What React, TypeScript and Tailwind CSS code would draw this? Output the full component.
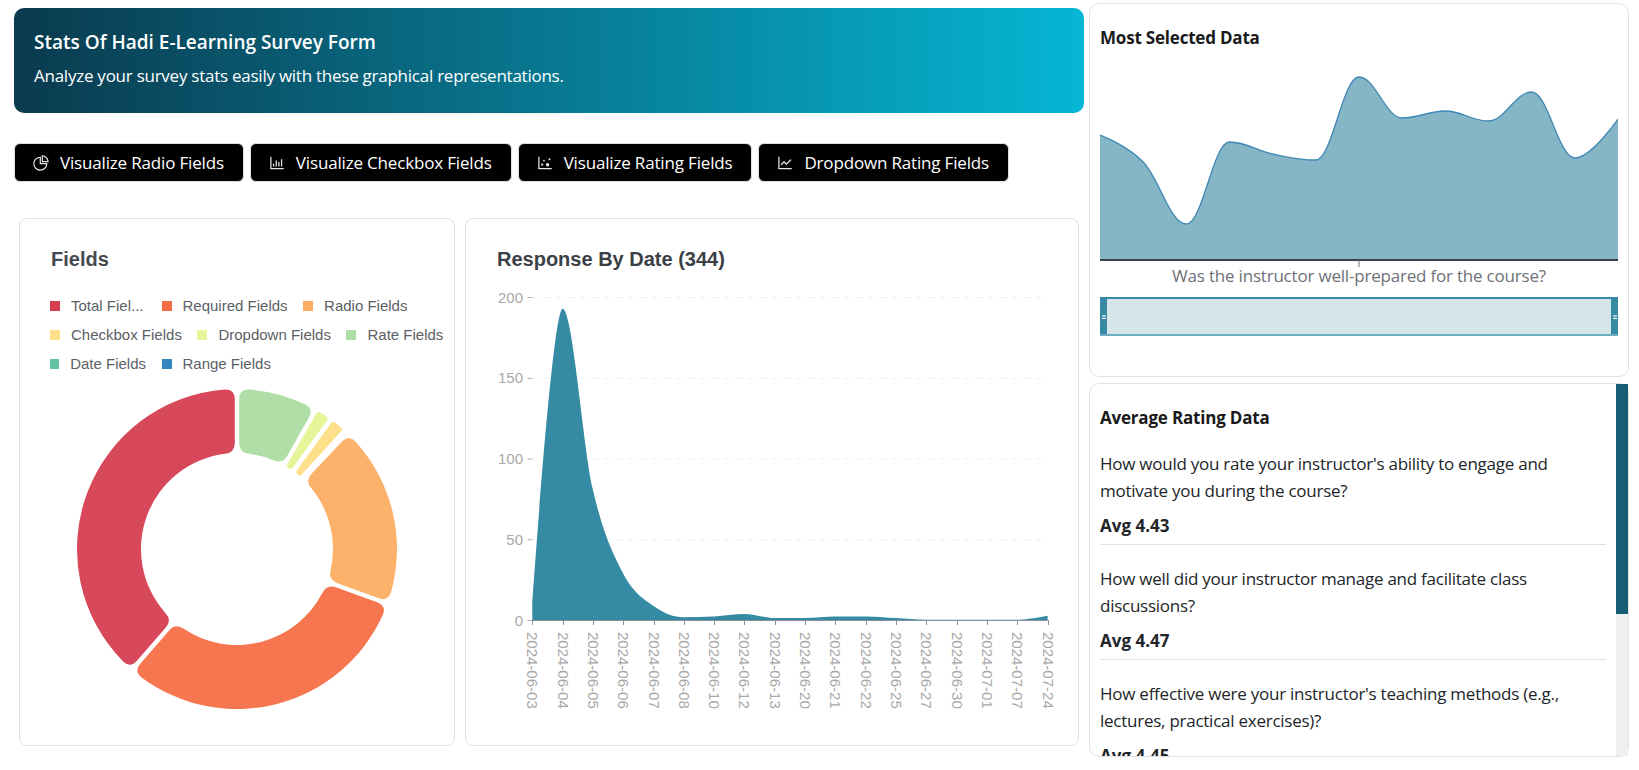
import { AiOutlineBarChart, AiOutlineDotChart, AiOutlineLineChart, AiOutlinePieChart } from "react-icons/ai"

const BUTTONS = [
  { label: "Visualize Radio Fields", icon: AiOutlinePieChart },
  { label: "Visualize Checkbox Fields", icon: AiOutlineBarChart },
  { label: "Visualize Rating Fields", icon: AiOutlineDotChart },
  { label: "Dropdown Rating Fields", icon: AiOutlineLineChart },
]

const LEGEND = [
  { label: "Total Fiel...", color: "bg-[#d53e4f]", width: "w-[96px]" },
  { label: "Required Fields", color: "bg-[#f46d43]", width: "" },
  { label: "Radio Fields", color: "bg-[#fdae61]", width: "" },
  { label: "Checkbox Fields", color: "bg-[#fee08b]", width: "" },
  { label: "Dropdown Fields", color: "bg-[#e6f598]", width: "" },
  { label: "Rate Fields", color: "bg-[#abdda4]", width: "" },
  { label: "Date Fields", color: "bg-[#66c2a5]", width: "w-[96px]" },
  { label: "Range Fields", color: "bg-[#3288bd]", width: "" },
]

// clockwise degrees from 12 o'clock
const SLICES = [
  { from: 221, to: 360, fill: "#d7485a" },
  { from: 110, to: 221, fill: "#f6774f" },
  { from: 43.5, to: 110, fill: "#fdb26b" },
  { from: 36, to: 42.3, fill: "#fee08b" },
  { from: 29.5, to: 35.8, fill: "#e6f598" },
  { from: 0, to: 29.5, fill: "#afdfa7" },
]

const DATES = [
  "2024-06-03", "2024-06-04", "2024-06-05", "2024-06-06", "2024-06-07", "2024-06-08",
  "2024-06-10", "2024-06-12", "2024-06-13", "2024-06-20", "2024-06-21", "2024-06-22",
  "2024-06-25", "2024-06-27", "2024-06-30", "2024-07-01", "2024-07-07", "2024-07-24",
]
const RESPONSES = [11, 193, 81, 29, 9, 2, 2.5, 4, 1.5, 1.5, 2.5, 2.5, 1.5, 0.5, 0.5, 0.5, 0.5, 3]
// page y of each point on the Most Selected curve
const SELECTED = [135, 162, 224, 142, 154, 160, 77, 118, 111, 121, 92, 158, 119]

const RATINGS = [
  { q: "How would you rate your instructor's ability to engage and motivate you during the course?", avg: "4.43" },
  { q: "How well did your instructor manage and facilitate class discussions?", avg: "4.47" },
  { q: "How effective were your instructor's teaching methods (e.g., lectures, practical exercises)?", avg: "4.45" },
]

function sectorPath(from: number, to: number, cx: number, cy: number, r0: number, r1: number, pad: number) {
  const rad = (d: number) => (d * Math.PI) / 180
  const pt = (r: number, a: number) => `${(cx + r * Math.sin(a)).toFixed(2)} ${(cy - r * Math.cos(a)).toFixed(2)}`
  const a = rad(from)
  const b = rad(to)
  const corner = Math.min(10, ((b - a) * r0 - pad * 2) / 2)
  const start = (r: number) => a + Math.asin(pad / r)
  const end = (r: number) => b - Math.asin(pad / r)
  const large = b - a > Math.PI ? 1 : 0
  return [
    `M${pt(r1 - corner, start(r1 - corner))}`,
    `Q${pt(r1, start(r1))} ${pt(r1, start(r1) + corner / r1)}`,
    `A${r1} ${r1} 0 ${large} 1 ${pt(r1, end(r1) - corner / r1)}`,
    `Q${pt(r1, end(r1))} ${pt(r1 - corner, end(r1 - corner))}`,
    `L${pt(r0 + corner, end(r0 + corner))}`,
    `Q${pt(r0, end(r0))} ${pt(r0, end(r0) - corner / r0)}`,
    `A${r0} ${r0} 0 ${large} 0 ${pt(r0, start(r0) + corner / r0)}`,
    `Q${pt(r0, start(r0))} ${pt(r0 + corner, start(r0 + corner))}`,
    "Z",
  ].join(" ")
}

// smooth curve, flat at local extremes so it doesn't overshoot
function smoothLine(points: [number, number][], k = 1 / 3) {
  let d = `M${points[0][0]} ${points[0][1]}`
  const last = points.length - 1
  const slope = (i: number) => {
    if (i === 0 || i === last) return 0
    const [x0, y0] = points[i - 1]
    const [x1, y1] = points[i + 1]
    const [, y] = points[i]
    if ((y - y0) * (y1 - y) <= 0) return 0
    return (y1 - y0) / (x1 - x0)
  }
  for (let i = 0; i < last; i++) {
    const [x0, y0] = points[i]
    const [x1, y1] = points[i + 1]
    const dx = (x1 - x0) * k
    const c1 = i === 0 ? 0 : dx
    const c2 = i === last - 1 ? 0 : dx
    d += ` C${x0 + c1} ${y0 + slope(i) * c1} ${x1 - c2} ${y1 - slope(i + 1) * c2} ${x1} ${y1}`
  }
  return d
}

function DonutChart() {
  return (
    <svg width="322" height="324" viewBox="0 0 322 324" className="mt-[13px] ml-[25px] block">
      {SLICES.map((s) => (
        <path key={s.fill} d={sectorPath(s.from, s.to, 161, 162, 96, 160, 2.2)} fill={s.fill} />
      ))}
    </svg>
  )
}

function ResponseChart() {
  const x0 = 532.3
  const step = (1047.6 - x0) / 17
  const yAt = (v: number) => 620.5 - (v * 323) / 200
  const points = RESPONSES.map((v, i) => [x0 + i * step, yAt(v)] as [number, number])
  const line = smoothLine(points)
  return (
    <svg width="600" height="440" viewBox="480 285 600 440" className="-ml-[17px] mt-[14px] block" fontFamily="'Liberation Sans', Arial, sans-serif" fontSize="15" fill="#a8a8a8">
      {[0, 50, 100, 150, 200].map((v) => (
        <g key={v}>
          {v > 0 && <line x1={x0} x2="1042" y1={yAt(v)} y2={yAt(v)} stroke="#eeeeee" strokeDasharray="6 6" />}
          <line x1="527.5" x2={x0} y1={yAt(v)} y2={yAt(v)} stroke="#a8a8a8" />
          <text x="523" y={yAt(v) + 5} textAnchor="end">{v}</text>
        </g>
      ))}
      <path d={`${line} L1047.6 620.5 L${x0} 620.5 Z`} fill="#358aa4" />
      <line x1={x0} x2="1047.6" y1="620.5" y2="620.5" stroke="#8a8f99" />
      {DATES.map((date, i) => {
        const x = Math.round(x0 + i * step)
        return (
          <g key={date}>
            <line x1={x + 0.5} x2={x + 0.5} y1="620" y2="625" stroke="#8a8f99" />
            <text transform={`translate(${x - 5} 632) rotate(90)`}>{date}</text>
          </g>
        )
      })}
    </svg>
  )
}

function SelectedChart() {
  const step = 518 / 12
  const points = SELECTED.map((y, i) => [i * step, y] as [number, number])
  const line = smoothLine(points, 0.38)
  return (
    <svg width="518" height="208" viewBox="0 60 518 208" className="block">
      <path d={`${line} L518 260 L0 260 Z`} fill="#85b6c6" />
      <path d={line} fill="none" stroke="#3f87b5" strokeWidth="1.3" />
      <line x1="0" x2="518" y1="260" y2="260" stroke="#37424a" strokeWidth="2" />
      <line x1="259" x2="259" y1="260" y2="267" stroke="#6e7079" />
    </svg>
  )
}

function Handle() {
  return (
    <div className="flex w-[7px] flex-col items-center justify-center gap-[1px] bg-[#368aa3]">
      <div className="h-[2px] w-[4px] bg-[#a9ced9]" />
      <div className="h-[1px] w-[4px] bg-white" />
    </div>
  )
}

export default function App() {
  return (
    <div className="flex h-[770px] w-[1639px] overflow-hidden bg-white font-['Open_Sans',sans-serif] text-[#212529]">
      {/* Left column */}
      <div className="w-[1089px] shrink-0 pl-[14px] pt-[8px]">
        <header className="h-[105px] w-[1070px] rounded-[10px] bg-linear-to-r/srgb from-[#0a3a4e] to-[#06b6d4] px-[20px] pt-[20px] text-white">
          <h1 className="text-[19px] leading-[28px] font-semibold">Stats Of Hadi E-Learning Survey Form</h1>
          <p className="mt-[8px] text-[17px] leading-[24px] tracking-[-0.25px]">Analyze your survey stats easily with these graphical representations.</p>
        </header>

        <div className="mt-[30px] flex gap-[6px]">
          {BUTTONS.map((btn) => {
            const Icon = btn.icon
            return (
              <button key={btn.label} className="flex h-[39px] items-center gap-[10px] rounded-[6px] border border-[#dddddd] bg-black pr-[19px] pl-[17px] text-[17px] tracking-[-0.17px] text-white">
                <Icon size={18} className="text-[#e4e4e4]" />
                {btn.label}
              </button>
            )
          })}
        </div>

        <div className="mt-[36px] ml-[5px] flex gap-[10px] font-['Liberation_Sans',Arial,sans-serif]">
          <section className="h-[528px] w-[436px] rounded-[8px] border border-[#e0e0e6] pt-[28px] pl-[31px]">
            <h2 className="text-[20px] leading-[24px] font-bold text-[#464a50]">Fields</h2>
            <div className="mt-[25px] -ml-px flex w-[400px] flex-wrap gap-x-[15.5px] gap-y-[9px] text-[15px] leading-[20px] text-[#5c5f66]">
              {LEGEND.map((item) => (
                <div key={item.label} className={`flex items-center gap-[11px] whitespace-nowrap ${item.width}`}>
                  <span className={`h-[10px] w-[10px] ${item.color}`} />
                  {item.label}
                </div>
              ))}
            </div>
            <DonutChart />
          </section>

          <section className="h-[528px] w-[614px] rounded-[8px] border border-[#e0e0e6] pt-[28px] pl-[31px]">
            <h2 className="text-[20px] leading-[24px] font-bold text-[#3b3f46]">Response By Date (344)</h2>
            <ResponseChart />
          </section>
        </div>
      </div>

      {/* Right column */}
      <div className="w-[540px] shrink-0 pt-[3px]">
        <section className="h-[374px] rounded-[10px] border border-[#e2e2e2] px-[10px] pt-[22px]">
          <h3 className="text-[17px] leading-[24px] font-bold tracking-[-0.2px] text-[#1a1a1a]">Most Selected Data</h3>
          <div className="mt-[10px]">
            <SelectedChart />
          </div>
          <p className="mt-[-4px] text-center text-[17px] leading-[24px] tracking-[-0.2px] text-[#6e7079]">Was the instructor well-prepared for the course?</p>
          <div className="mt-[9px] flex h-[39px] w-[518px] border-y-2 border-t-[#368aa3] border-b-[#6fadc0] bg-[#d5e6ea]">
            <Handle />
            <div className="flex-1" />
            <Handle />
          </div>
        </section>

        <section className="mt-[6px] flex h-[374px] rounded-[10px] border border-[#e2e2e2]">
          <div className="min-w-0 flex-1 overflow-hidden rounded-l-[10px] px-[10px] pt-[22px]">
            <h3 className="text-[17px] leading-[24px] font-bold tracking-[-0.2px] text-[#1a1a1a]">Average Rating Data</h3>
            {RATINGS.map((r) => (
              <div key={r.avg} className="mt-[21px] border-b border-[#dee2e6] pb-[6px]">
                <p className="text-[17px] leading-[26.5px] tracking-[-0.25px]">{r.q}</p>
                <p className="mt-[10px] text-[17px] leading-[24px] font-bold">Avg {r.avg}</p>
              </div>
            ))}
          </div>
          <div className="w-[12px] shrink-0 bg-[#f0f0f0]">
            <div className="h-[230px] bg-[#175e75]" />
          </div>
        </section>
      </div>
    </div>
  )
}
